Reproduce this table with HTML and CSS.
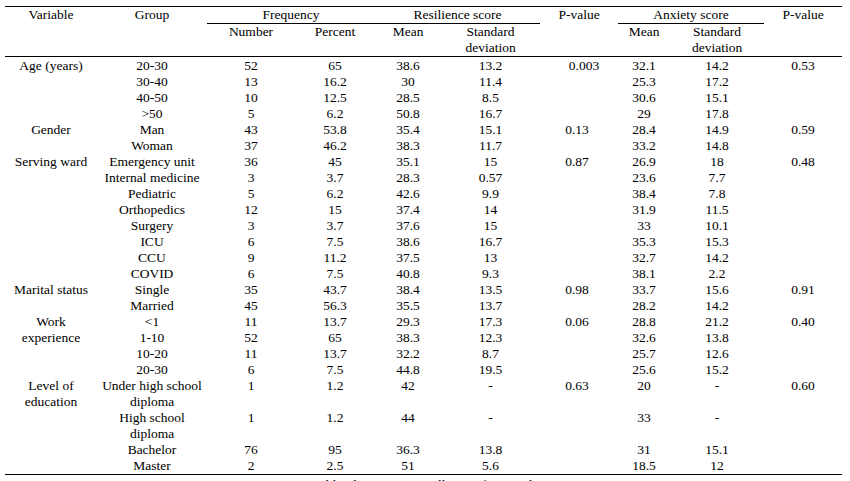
FILE: index.html
```html
<!DOCTYPE html>
<html>
<head>
<meta charset="utf-8">
<link rel="stylesheet" href="styles.css">
</head>
<body>
<table class="tbl">
  <colgroup>
    <col class="c-var"><col class="c-grp"><col class="c-num"><col class="c-pct"><col class="c-mean"><col class="c-sd"><col class="c-p"><col class="c-amean"><col class="c-asd"><col class="c-p2">
  </colgroup>
  <thead>
    <tr>
      <th rowspan="2" class="top bot">Variable</th>
      <th rowspan="2" class="top bot">Group</th>
      <th colspan="2" class="top under">Frequency</th>
      <th colspan="2" class="top under">Resilience score</th>
      <th rowspan="2" class="top bot">P-value</th>
      <th colspan="2" class="top under">Anxiety score</th>
      <th rowspan="2" class="top bot">P-value</th>
    </tr>
    <tr>
      <th class="bot">Number</th>
      <th class="bot">Percent</th>
      <th class="bot">Mean</th>
      <th class="bot">Standard<br>deviation</th>
      <th class="bot">Mean</th>
      <th class="bot">Standard<br>deviation</th>
    </tr>
  </thead>
  <tbody>
    <tr><td rowspan="4">Age (years)</td><td>20-30</td><td>52</td><td>65</td><td>38.6</td><td>13.2</td><td rowspan="4" class="pv pv-wide">0.003</td><td>32.1</td><td>14.2</td><td rowspan="4">0.53</td></tr>
    <tr><td>30-40</td><td>13</td><td>16.2</td><td>30</td><td>11.4</td><td>25.3</td><td>17.2</td></tr>
    <tr><td>40-50</td><td>10</td><td>12.5</td><td>28.5</td><td>8.5</td><td>30.6</td><td>15.1</td></tr>
    <tr><td>&gt;50</td><td>5</td><td>6.2</td><td>50.8</td><td>16.7</td><td>29</td><td>17.8</td></tr>

    <tr><td rowspan="2">Gender</td><td>Man</td><td>43</td><td>53.8</td><td>35.4</td><td>15.1</td><td rowspan="2" class="pv">0.13</td><td>28.4</td><td>14.9</td><td rowspan="2">0.59</td></tr>
    <tr><td>Woman</td><td>37</td><td>46.2</td><td>38.3</td><td>11.7</td><td>33.2</td><td>14.8</td></tr>

    <tr><td rowspan="8">Serving ward</td><td>Emergency unit</td><td>36</td><td>45</td><td>35.1</td><td>15</td><td rowspan="8" class="pv">0.87</td><td>26.9</td><td>18</td><td rowspan="8">0.48</td></tr>
    <tr><td>Internal medicine</td><td>3</td><td>3.7</td><td>28.3</td><td>0.57</td><td>23.6</td><td>7.7</td></tr>
    <tr><td>Pediatric</td><td>5</td><td>6.2</td><td>42.6</td><td>9.9</td><td>38.4</td><td>7.8</td></tr>
    <tr><td>Orthopedics</td><td>12</td><td>15</td><td>37.4</td><td>14</td><td>31.9</td><td>11.5</td></tr>
    <tr><td>Surgery</td><td>3</td><td>3.7</td><td>37.6</td><td>15</td><td>33</td><td>10.1</td></tr>
    <tr><td>ICU</td><td>6</td><td>7.5</td><td>38.6</td><td>16.7</td><td>35.3</td><td>15.3</td></tr>
    <tr><td>CCU</td><td>9</td><td>11.2</td><td>37.5</td><td>13</td><td>32.7</td><td>14.2</td></tr>
    <tr><td>COVID</td><td>6</td><td>7.5</td><td>40.8</td><td>9.3</td><td>38.1</td><td>2.2</td></tr>

    <tr><td rowspan="2">Marital status</td><td>Single</td><td>35</td><td>43.7</td><td>38.4</td><td>13.5</td><td rowspan="2" class="pv">0.98</td><td>33.7</td><td>15.6</td><td rowspan="2">0.91</td></tr>
    <tr><td>Married</td><td>45</td><td>56.3</td><td>35.5</td><td>13.7</td><td>28.2</td><td>14.2</td></tr>

    <tr><td rowspan="4">Work<br>experience</td><td>&lt;1</td><td>11</td><td>13.7</td><td>29.3</td><td>17.3</td><td rowspan="4" class="pv">0.06</td><td>28.8</td><td>21.2</td><td rowspan="4">0.40</td></tr>
    <tr><td>1-10</td><td>52</td><td>65</td><td>38.3</td><td>12.3</td><td>32.6</td><td>13.8</td></tr>
    <tr><td>10-20</td><td>11</td><td>13.7</td><td>32.2</td><td>8.7</td><td>25.7</td><td>12.6</td></tr>
    <tr><td>20-30</td><td>6</td><td>7.5</td><td>44.8</td><td>19.5</td><td>25.6</td><td>15.2</td></tr>

    <tr><td rowspan="4" class="last">Level of<br>education</td><td>Under high school<br>diploma</td><td>1</td><td>1.2</td><td>42</td><td>-</td><td rowspan="4" class="pv last">0.63</td><td>20</td><td>-</td><td rowspan="4" class="last">0.60</td></tr>
    <tr><td>High school<br>diploma</td><td>1</td><td>1.2</td><td>44</td><td>-</td><td>33</td><td>-</td></tr>
    <tr><td>Bachelor</td><td>76</td><td>95</td><td>36.3</td><td>13.8</td><td>31</td><td>15.1</td></tr>
    <tr class="final"><td>Master</td><td>2</td><td>2.5</td><td>51</td><td>5.6</td><td>18.5</td><td>12</td></tr>
  </tbody>
</table>
<p class="note">* Bold indicates statistically significant values</p>
</body>
</html>
```

FILE: styles.css
```css
html, body {
  margin: 0;
  padding: 0;
  background: #ffffff;
}

body {
  font-family: "Liberation Serif", "Times New Roman", serif;
  font-size: 13.5px;
  line-height: 16px;
  color: #000000;
  overflow: hidden;
}

.tbl {
  margin: 6px 0 0 5px;
  width: 837px;
  table-layout: fixed;
  border-collapse: separate;
  border-spacing: 0;
}

.c-var { width: 92px; }
.c-grp { width: 110px; }
.c-num { width: 88px; }
.c-pct { width: 80px; }
.c-mean { width: 66px; }
.c-sd { width: 99px; }
.c-p { width: 78px; }
.c-amean { width: 52px; }
.c-asd { width: 94px; }
.c-p2 { width: 78px; }

.tbl th,
.tbl td {
  padding: 0;
  font-weight: normal;
  text-align: center;
  vertical-align: top;
  line-height: 16px;
  white-space: nowrap;
}

.tbl th.top {
  border-top: 1px solid #000;
}

.tbl th.under {
  border-bottom: 1px solid #000;
}

.tbl th.bot {
  border-bottom: 1px solid #000;
}

.tbl tbody tr:first-child td {
  padding-top: 1px;
}

.tbl td.pv {
  padding-right: 4px;
}

.tbl td.pv-wide {
  padding-left: 14px;
}

.tbl tr.final td,
.tbl td.last {
  border-bottom: 1px solid #000;
}

.note {
  margin: 2px 0 0 0;
  text-align: center;
  padding-left: 0;
  line-height: 16px;
}
```
